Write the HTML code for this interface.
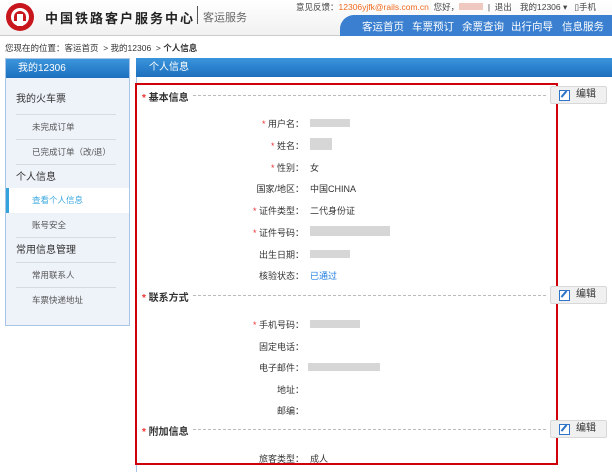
<!DOCTYPE html>
<html><head><meta charset="utf-8"><style>
*{margin:0;padding:0;box-sizing:border-box}
body{width:612px;height:472px;overflow:hidden;background:#fff;font-family:"Liberation Sans","Noto Sans CJK SC",sans-serif;font-size:9px;color:#333;position:relative}
.a{position:absolute;white-space:nowrap}
.hdr{left:0;top:0;width:612px;height:36px;background:linear-gradient(#fff,#f1f1f1);border-bottom:1px solid #ccc}
.nav{left:340px;top:15px;width:272px;height:21px;background:#3a7fd0;border-top-left-radius:14px}
.nav span{position:absolute;top:4px;color:#fff;font-size:10.5px}
.side{left:5px;top:58px;width:125px;height:268px;background:#eef2f9;border:1px solid #a8c4e6}
.bh{height:19px;background:linear-gradient(#3b95dc,#1c6fbe);color:#fff;font-size:10px;line-height:19px}
.si{position:absolute;left:10px;width:100px;border-bottom:1px solid #d6dbe3;height:25px}
.red{left:135px;top:83px;width:423px;height:382px;border:2.5px solid #d0000a}
.lab{text-align:right;width:120px;left:184px}
.st{color:#e33}
.sec{font-weight:bold;font-size:10px;color:#333}
.dash{height:0;border-top:1px dashed #bbb}
.btn{left:550px;width:57px;height:18px;background:#f0f0f0;border:1px solid #d8d8d8;border-radius:2px;font-size:10px;line-height:16px;padding-left:25px}
.btn i{position:absolute;left:8px;top:3px;width:11px;height:11px;border:1.5px solid #2f74c7;background:#fff}
.btn i:after{content:"";position:absolute;left:3px;top:-1px;width:2px;height:8px;background:#2f74c7;transform:rotate(40deg)}
.blur{background:#d6d6d6;height:8px}
</style></head><body>
<div class="a hdr"></div>
<div class="a" style="left:6px;top:3px;width:28px;height:28px;border-radius:50%;background:#c8161d"></div>
<div class="a" style="left:11px;top:8px;width:18px;height:18px;border-radius:50%;background:#fff"></div>
<div class="a" style="left:14px;top:11px;width:12px;height:10px;border-radius:6px 6px 0 0;background:#c8161d"></div>
<div class="a" style="left:17px;top:14px;width:6px;height:12px;background:#fff"></div>
<div class="a" style="left:45px;top:8px;font-size:13px;font-weight:bold;color:#222;letter-spacing:2px">中国铁路客户服务中心</div>
<div class="a" style="left:197px;top:6px;width:1px;height:18px;background:#555"></div>
<div class="a" style="left:203px;top:9px;font-size:11px;color:#666">客运服务</div>
<div class="a" style="left:296px;top:1px;font-size:8.5px;color:#444">意见反馈：<span style="color:#f06a1e">12306yjfk@rails.com.cn</span>&nbsp; 您好，<span style="display:inline-block;width:24px;height:7px;background:#efc9c0"></span>&nbsp; | &nbsp;退出</div>
<div class="a" style="left:520px;top:1px;font-size:8.5px;color:#444">我的12306 ▾ &nbsp; ▯手机</div>
<div class="a nav"><span style="left:22px">客运首页</span><span style="left:72px">车票预订</span><span style="left:122px">余票查询</span><span style="left:171px">出行向导</span><span style="left:222px">信息服务</span></div>
<div class="a" style="left:5px;top:42px;font-size:8.5px;color:#333">您现在的位置：客运首页 &nbsp;&gt; 我的12306 &nbsp;&gt; <b>个人信息</b></div>
<div class="a side"><div class="bh" style="padding-left:12px">我的12306</div>
<div class="si" style="top:31px;font-size:10px">我的火车票</div>
<div class="si" style="top:56px;padding-left:16px;font-size:8.5px;color:#555;line-height:25px">未完成订单</div>
<div class="si" style="top:81px;padding-left:16px;font-size:8.5px;color:#555;line-height:25px">已完成订单（改/退）</div>
<div class="si" style="top:106px;font-size:10px;line-height:25px;border:0">个人信息</div>
<div class="a" style="left:0;top:129px;width:123px;height:25px;background:#fff;border-left:3px solid #34a3dc;padding-left:23px;line-height:25px;color:#3aa8e0;font-size:8.5px">查看个人信息</div>
<div class="si" style="top:154px;padding-left:16px;font-size:8.5px;color:#555;line-height:25px">账号安全</div>
<div class="si" style="top:179px;font-size:10px;line-height:25px">常用信息管理</div>
<div class="si" style="top:204px;padding-left:16px;font-size:8.5px;color:#555;line-height:25px">常用联系人</div>
<div class="si" style="top:229px;padding-left:16px;font-size:8.5px;color:#555;line-height:25px;border:0">车票快递地址</div>
</div>
<div class="a" style="left:136px;top:58px;width:476px;height:414px;border-left:1px solid #a8c4e6"></div>
<div class="a bh" style="left:136px;top:58px;width:476px;padding-left:13px">个人信息</div>
<div class="a red"></div>
<div class="a sec" style="left:142px;top:89px"><span class="st">*</span> 基本信息</div>
<div class="a dash" style="left:193px;top:95px;width:353px"></div>
<div class="a btn" style="top:86px"><i></i>编辑</div>
<div class="a sec" style="left:142px;top:289px"><span class="st">*</span> 联系方式</div>
<div class="a dash" style="left:193px;top:295px;width:353px"></div>
<div class="a btn" style="top:286px"><i></i>编辑</div>
<div class="a sec" style="left:142px;top:423px"><span class="st">*</span> 附加信息</div>
<div class="a dash" style="left:193px;top:429px;width:353px"></div>
<div class="a btn" style="top:420px"><i></i>编辑</div>
<div class="a lab" style="top:117px"><span class="st">*</span> 用户名：</div><div class="a blur" style="left:310px;top:119px;width:40px"></div>
<div class="a lab" style="top:139px"><span class="st">*</span> 姓名：</div><div class="a blur" style="left:310px;top:138px;width:22px;height:12px"></div>
<div class="a lab" style="top:161px"><span class="st">*</span> 性别：</div><div class="a" style="left:310px;top:161px">女</div>
<div class="a lab" style="top:182px">国家/地区：</div><div class="a" style="left:310px;top:182px">中国CHINA</div>
<div class="a lab" style="top:204px"><span class="st">*</span> 证件类型：</div><div class="a" style="left:310px;top:204px">二代身份证</div>
<div class="a lab" style="top:226px"><span class="st">*</span> 证件号码：</div><div class="a blur" style="left:310px;top:226px;width:80px;height:10px"></div>
<div class="a lab" style="top:248px">出生日期：</div><div class="a blur" style="left:310px;top:250px;width:40px"></div>
<div class="a lab" style="top:269px">核验状态：</div><div class="a" style="left:310px;top:269px;color:#1e7be0">已通过</div>
<div class="a lab" style="top:318px"><span class="st">*</span> 手机号码：</div><div class="a blur" style="left:310px;top:320px;width:50px"></div>
<div class="a lab" style="top:340px">固定电话：</div>
<div class="a lab" style="top:361px">电子邮件：</div><div class="a blur" style="left:308px;top:363px;width:72px"></div>
<div class="a lab" style="top:383px">地址：</div>
<div class="a lab" style="top:404px">邮编：</div>
<div class="a lab" style="top:452px">旅客类型：</div><div class="a" style="left:310px;top:452px">成人</div>
</body></html>
